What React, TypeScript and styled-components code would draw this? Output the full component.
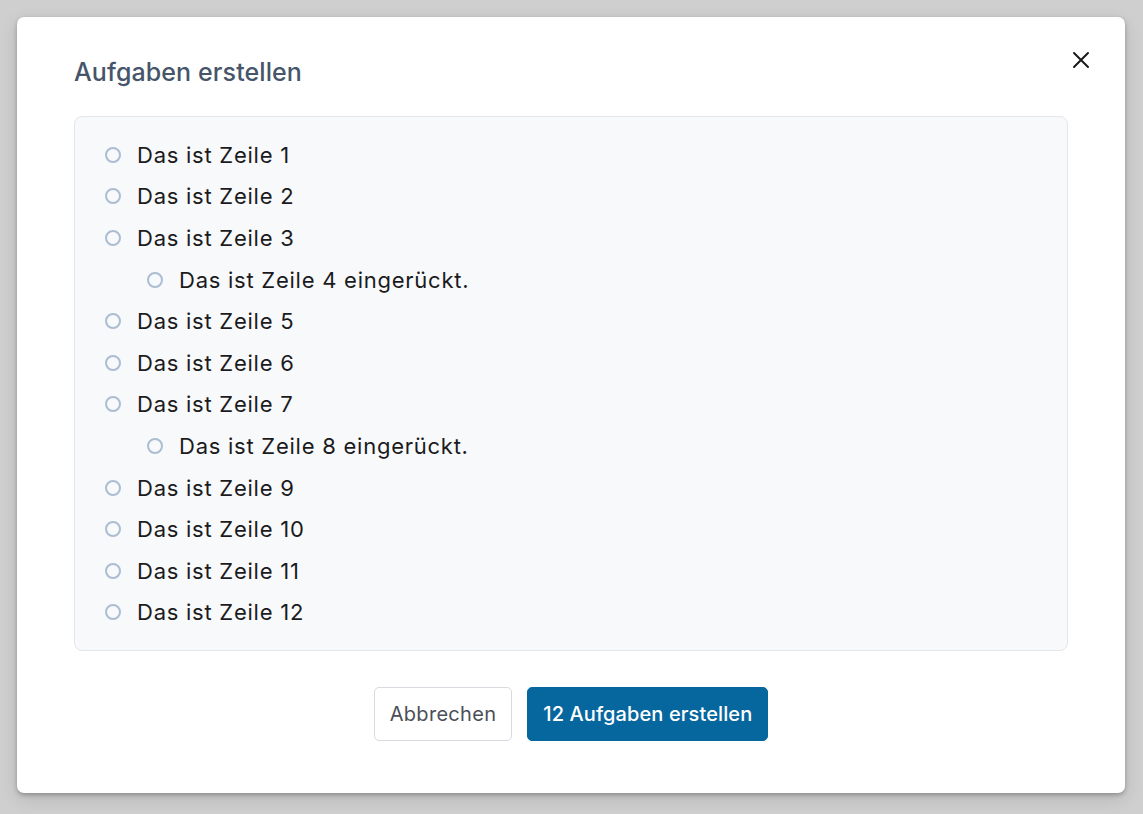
import styled, { createGlobalStyle } from "styled-components";

const GlobalStyle = createGlobalStyle`
  html, body {
    margin: 0;
    padding: 0;
    background: #cfcfcf;
    font-family: Inter, "Noto Sans", "Liberation Sans", sans-serif;
  }
  * {
    box-sizing: border-box;
  }
`;

const Page = styled.div`
  width: 1143px;
  height: 814px;
  padding: 17px 18px 0 17px;
`;

const Modal = styled.div`
  position: relative;
  width: 1108px;
  height: 776px;
  background: #ffffff;
  border-radius: 7px;
  box-shadow: 0 2px 4px rgba(0, 0, 0, 0.25), 0 6px 18px rgba(0, 0, 0, 0.12);
  padding: 39px 57px 0 57px;
  display: flex;
  flex-direction: column;
`;

const Title = styled.h2`
  margin: 0;
  font-size: 25px;
  line-height: 32px;
  font-weight: 500;
  color: #465569;
  letter-spacing: 0.1px;
`;

const CloseBtn = styled.button`
  position: absolute;
  top: 33px;
  right: 34px;
  width: 20px;
  height: 20px;
  padding: 0;
  border: none;
  background: transparent;
  display: flex;
  align-items: center;
  justify-content: center;
  cursor: pointer;
`;

const ListBox = styled.div`
  margin-top: 28px;
  background: #f8f9fb;
  border: 1px solid #e3e6eb;
  border-radius: 8px;
  padding: 17px 30px 17px 30px;
`;

const Row = styled.div<{ $indent?: boolean }>`
  display: flex;
  align-items: center;
  height: 41.6px;
  padding-left: ${(p) => (p.$indent ? "42px" : "0")};
  font-size: 22px;
  letter-spacing: 0.75px;
  color: #1b1b1d;
`;

const Radio = styled.span`
  width: 16px;
  height: 16px;
  border-radius: 50%;
  border: 2px solid #abbdd2;
  background: #f8f9fb;
  margin-right: 16px;
  flex-shrink: 0;
`;

const Footer = styled.div`
  display: flex;
  justify-content: center;
  gap: 15px;
  margin-top: 36px;
`;

const Button = styled.button<{ $primary?: boolean }>`
  height: 54px;
  padding: 0 15px;
  border-radius: 5px;
  font-family: inherit;
  font-size: 20px;
  letter-spacing: ${(p) => (p.$primary ? "0.1px" : "0.3px")};
  cursor: pointer;
  border: 1px solid ${(p) => (p.$primary ? "#06679f" : "#d7dbe0")};
  background: ${(p) => (p.$primary ? "#06679f" : "#ffffff")};
  color: ${(p) => (p.$primary ? "#ffffff" : "#4a4f57")};
  font-weight: ${(p) => (p.$primary ? 500 : 400)};
`;

const rows = [
  { text: "Das ist Zeile 1" },
  { text: "Das ist Zeile 2" },
  { text: "Das ist Zeile 3" },
  { text: "Das ist Zeile 4 eingerückt.", indent: true },
  { text: "Das ist Zeile 5" },
  { text: "Das ist Zeile 6" },
  { text: "Das ist Zeile 7" },
  { text: "Das ist Zeile 8 eingerückt.", indent: true },
  { text: "Das ist Zeile 9" },
  { text: "Das ist Zeile 10" },
  { text: "Das ist Zeile 11" },
  { text: "Das ist Zeile 12" },
];

export default function App() {
  return (
    <>
      <GlobalStyle />
      <Page>
        <Modal>
          <CloseBtn aria-label="Schließen">
            <svg width="18" height="18" viewBox="0 0 18 18">
              <path
                d="M2 2 L16 16 M16 2 L2 16"
                stroke="#1a1a1a"
                strokeWidth="2"
                strokeLinecap="round"
              />
            </svg>
          </CloseBtn>
          <Title>Aufgaben erstellen</Title>
          <ListBox>
            {rows.map((r) => (
              <Row key={r.text} $indent={r.indent}>
                <Radio />
                {r.text}
              </Row>
            ))}
          </ListBox>
          <Footer>
            <Button>Abbrechen</Button>
            <Button $primary>12 Aufgaben erstellen</Button>
          </Footer>
        </Modal>
      </Page>
    </>
  );
}
